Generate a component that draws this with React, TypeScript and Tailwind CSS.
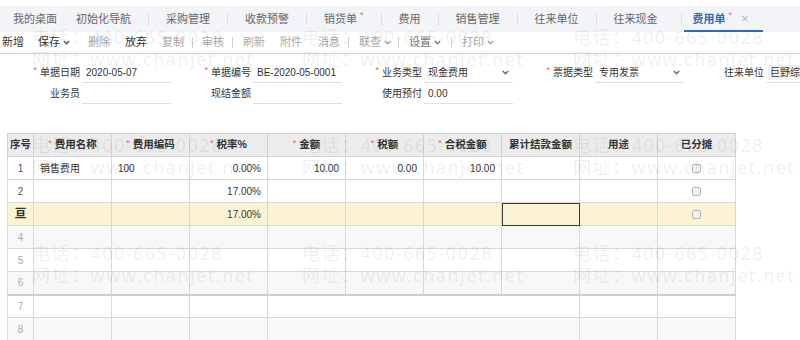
import React from 'react';

function Chev({ className = '' }: { className?: string }) {
  return (
    <svg className={className} width="7" height="5" viewBox="0 0 7 5" fill="none">
      <polyline points="0.8,0.9 3.5,3.7 6.2,0.9" stroke="currentColor" strokeWidth="1.4" />
    </svg>
  );
}

function Star() {
  return <span className="relative -top-[2px] mr-[3px] text-[9px] font-normal text-[#ef5b5b]">*</span>;
}

function TabSep({ className = 'mx-[17px]' }: { className?: string }) {
  return <span className={`h-[12px] w-px self-center bg-[#dcdfe5] ${className}`} />;
}

function ToolSep({ className = '' }: { className?: string }) {
  return <span className={`h-[11px] w-px bg-[#cfcfcf] ${className}`} />;
}

function Field({
  label,
  required,
  value,
  select,
  wide,
}: {
  label: string;
  required?: boolean;
  value?: string;
  select?: boolean;
  wide?: boolean;
}) {
  return (
    <div className="flex h-[21px] w-[171px] shrink-0 items-stretch">
      <div className="flex w-[80px] shrink-0 items-center justify-end whitespace-nowrap text-[10px] text-[#333]">
        {required && <Star />}
        {label}
      </div>
      <div
        className={`ml-[2px] flex shrink-0 items-center border-b border-[#dedede] text-[10px] text-[#333] ${
          wide ? 'w-[120px] whitespace-nowrap pl-[2px]' : 'w-[89px] pl-[4px]'
        }`}
      >
        <span className={`flex-1 whitespace-nowrap ${wide ? 'bg-[#f4f4f4] px-[2px]' : ''}`}>{value}</span>
        {select && <Chev className="mr-[4px] text-[#666]" />}
      </div>
    </div>
  );
}

const cols = ['序号', '费用名称', '费用编码', '税率%', '金额', '税额', '合税金额', '累计结款金额', '用途', '已分摊'];
const required = [false, true, true, true, true, true, true, false, false, false];

function Check() {
  return <span className="inline-block h-[9px] w-[9px] rounded-[2px] border border-[#b5b5b5] bg-[#f1f1f1] align-middle" />;
}

export default function App() {
  const cell = 'h-[23px] border border-[#d8d8d8] px-[6px] text-[10px] whitespace-nowrap';
  const rowsTop = [
    { seq: '1', name: '销售费用', code: '100', rate: '0.00%', amt: '10.00', tax: '0.00', total: '10.00' },
    { seq: '2', name: '', code: '', rate: '17.00%', amt: '', tax: '', total: '' },
  ];
  const wm = [26, 134, 242];
  const wmx = [32, 302, 573];
  return (
    <div className="relative h-[340px] w-[800px] overflow-hidden bg-white text-[#333] [font-family:'Liberation_Sans','Noto_Sans_CJK_SC',sans-serif]">
      <div className="h-[6px]" />
      {/* tab bar */}
      <div className="flex h-[26px] items-stretch bg-[#f2f4f8] pl-[13px] text-[11px] text-[#666]">
        <div className="flex items-center">我的桌面</div>
        <div className="ml-[19px] flex items-center">初始化导航</div>
        <TabSep />
        <div className="flex items-center">采购管理</div>
        <TabSep />
        <div className="flex items-center">收款预警</div>
        <TabSep />
        <div className="flex items-center">
          销货单<span className="relative -top-[3px] ml-[3px] text-[9px] text-[#ef5b5b]">*</span>
        </div>
        <TabSep />
        <div className="flex items-center">费用</div>
        <TabSep />
        <div className="flex items-center">销售管理</div>
        <TabSep />
        <div className="flex items-center">往来单位</div>
        <TabSep />
        <div className="flex items-center">往来现金</div>
        <TabSep className="ml-[23px] mr-[2px]" />
        <div className="flex items-center border-b-2 border-[#2f6cb5] pl-[9px] pr-[14px] pt-[2px] font-semibold text-[#2f6cb5]">
          费用单<span className="relative -top-[3px] ml-[3px] text-[9px] font-normal text-[#ef5b5b]">*</span>
          <span className="ml-[9px] text-[13px] font-normal text-[#b5b5b5]">×</span>
        </div>
      </div>
      {/* toolbar */}
      <div className="flex h-[22px] items-center border-b border-[#d4d4d4] pl-[2px] text-[11px] shadow-[0_1px_2px_rgba(0,0,0,0.05)]">
        <span className="text-[#333]">新增</span>
        <span className="ml-[14px] flex items-center text-[#333]">
          保存<Chev className="ml-[3px] text-[#555]" />
        </span>
        <span className="ml-[18px] text-[#a8a8a8]">删除</span>
        <span className="ml-[15px] text-[#333]">放弃</span>
        <span className="ml-[15px] text-[#a8a8a8]">复制</span>
        <ToolSep className="ml-[8px] mr-[9px]" />
        <span className="text-[#a8a8a8]">审核</span>
        <ToolSep className="ml-[8px] mr-[10px]" />
        <span className="text-[#a8a8a8]">刷新</span>
        <span className="ml-[15px] text-[#a8a8a8]">附件</span>
        <span className="ml-[16px] text-[#a8a8a8]">消息</span>
        <ToolSep className="ml-[8px] mr-[10px]" />
        <span className="flex items-center text-[#a8a8a8]">
          联查<Chev className="ml-[3px]" />
        </span>
        <ToolSep className="ml-[7px] mr-[10px]" />
        <span className="flex items-center text-[#777]">
          设置<Chev className="ml-[3px]" />
        </span>
        <ToolSep className="ml-[10px] mr-[10px]" />
        <span className="flex items-center text-[#a8a8a8]">
          打印<Chev className="ml-[3px]" />
        </span>
      </div>
      {/* form */}
      <div className="pt-[8px]">
        <div className="flex">
          <Field label="单据日期" required value="2020-05-07" />
          <Field label="单据编号" required value="BE-2020-05-0001" />
          <Field label="业务类型" required value="现金费用" select />
          <Field label="票据类型" required value="专用发票" select />
          <Field label="往来单位" value="巨野综合" wide />
        </div>
        <div className="flex">
          <Field label="业务员" />
          <Field label="现结金额" />
          <Field label="使用预付" value="0.00" />
        </div>
      </div>
      {/* table */}
      <div className="pl-[7px] pt-[29px]">
        <table className="w-[728px] table-fixed border-collapse">
          <colgroup>
            <col className="w-[26px]" />
            {cols.slice(1).map((c) => (
              <col key={c} className="w-[78px]" />
            ))}
          </colgroup>
          <thead>
            <tr>
              {cols.map((c, i) => (
                <th
                  key={c}
                  className={`h-[23px] border border-[#d2d2d2] bg-[#ececec] text-center text-[10.5px] font-bold text-[#333] whitespace-nowrap ${
                    i === 0 ? 'px-0' : 'px-[4px]'
                  }`}
                >
                  {required[i] && <Star />}
                  {c}
                </th>
              ))}
            </tr>
          </thead>
          <tbody>
            {rowsTop.map((r) => (
              <tr key={r.seq} className="bg-white">
                <td className={`${cell} px-0 text-center text-[#555]`}>{r.seq}</td>
                <td className={cell}>{r.name}</td>
                <td className={cell}>{r.code}</td>
                <td className={`${cell} text-right`}>{r.rate}</td>
                <td className={`${cell} text-right`}>{r.amt}</td>
                <td className={`${cell} text-right`}>{r.tax}</td>
                <td className={`${cell} text-right`}>{r.total}</td>
                <td className={cell}></td>
                <td className={cell}></td>
                <td className={`${cell} text-center`}>
                  <Check />
                </td>
              </tr>
            ))}
            <tr className="bg-[#fcf3d2]">
              <td className={`${cell} px-0 text-center text-[12px] font-bold text-[#333]`}>亘</td>
              <td className={cell}></td>
              <td className={cell}></td>
              <td className={`${cell} text-right`}>17.00%</td>
              <td className={cell}></td>
              <td className={cell}></td>
              <td className={cell}></td>
              <td className={`${cell} outline outline-[1.5px] -outline-offset-[1px] outline-[#3a3a3a]`}></td>
              <td className={cell}></td>
              <td className={`${cell} text-center`}>
                <Check />
              </td>
            </tr>
            {[4, 5, 6].map((n) => (
              <tr key={n} className={n % 2 === 0 ? 'bg-[#f8f8f8]' : 'bg-white'}>
                <td
                  className={`${cell} px-0 text-center text-[9px] text-[#aaa] ${n === 6 ? 'border-b-2 border-b-[#cfcfcf]' : ''}`}
                >
                  {n}
                </td>
                {cols.slice(1).map((c) => (
                  <td key={c} className={`${cell} ${n === 6 ? 'border-b-2 border-b-[#cfcfcf]' : ''}`}></td>
                ))}
              </tr>
            ))}
            {[7, 8].map((n) => (
              <tr key={n} className={n % 2 === 0 ? 'bg-[#f8f8f8]' : 'bg-white'}>
                <td className={`${cell} px-0 text-center text-[9px] text-[#aaa]`}>{n}</td>
                <td className={cell}></td>
                <td className={cell}></td>
                <td className={cell}></td>
                <td className={cell} colSpan={4}></td>
                <td className={cell}></td>
                <td className={cell}></td>
              </tr>
            ))}
          </tbody>
        </table>
      </div>
      {/* watermark */}
      <div className="pointer-events-none absolute inset-0">
        {wm.map((t) =>
          wmx.map((l) => (
            <div
              key={`${t}-${l}`}
              className="absolute whitespace-nowrap text-[18px] leading-[22px] tracking-[1.5px] text-[rgba(0,0,0,0.08)] [font-family:'Noto_Sans','Noto_Sans_CJK_SC',sans-serif]"
              style={{ top: t, left: l }}
            >
              <div>电话：400-665-0028</div>
              <div>网址：www.chanjet.net</div>
            </div>
          ))
        )}
      </div>
    </div>
  );
}
